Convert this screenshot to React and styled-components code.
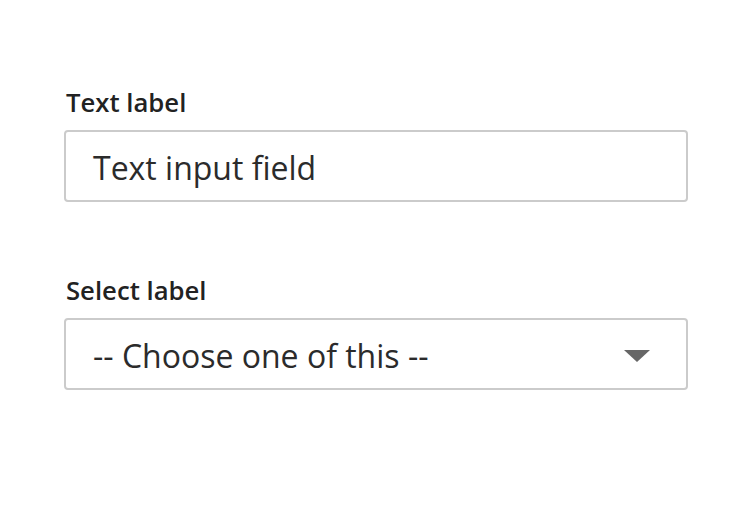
import React from 'react';
import styled, { createGlobalStyle } from 'styled-components';

const Global = createGlobalStyle`
	body {
		margin: 0;
		background: #fff;
		font-family: "Open Sans", "Noto Sans", sans-serif;
	}
`;

const Page = styled.div`
	display: flex;
	flex-direction: column;
	gap: 73px;
	width: 624px;
	padding: 87px 0 0 64px;
`;

const Field = styled.div`
	display: flex;
	flex-direction: column;
	gap: 11px;
`;

const Label = styled.label`
	font: 600 25.7px/32px "Open Sans", sans-serif;
	color: #222;
	padding-left: 2px;
`;

const Box = styled.div`
	position: relative;
	display: flex;
	align-items: center;
	box-sizing: border-box;
	height: 72px;
	padding: 3px 27px 0;
	border: 2px solid #cbcbcb;
	border-radius: 4px;
	font: 400 32px/40px "Open Sans", sans-serif;
	color: #2b2b2b;
`;

const Arrow = styled.span`
	position: absolute;
	right: 36px;
	top: 30px;
	width: 0;
	height: 0;
	border-left: 13px solid transparent;
	border-right: 13px solid transparent;
	border-top: 12px solid #666;
`;

export default function App() {
	return (
		<>
			<Global />
			<Page>
				<Field>
					<Label>Text label</Label>
					<Box>Text input field</Box>
				</Field>
				<Field>
					<Label>Select label</Label>
					<Box>
						-- Choose one of this --
						<Arrow />
					</Box>
				</Field>
			</Page>
		</>
	);
}
